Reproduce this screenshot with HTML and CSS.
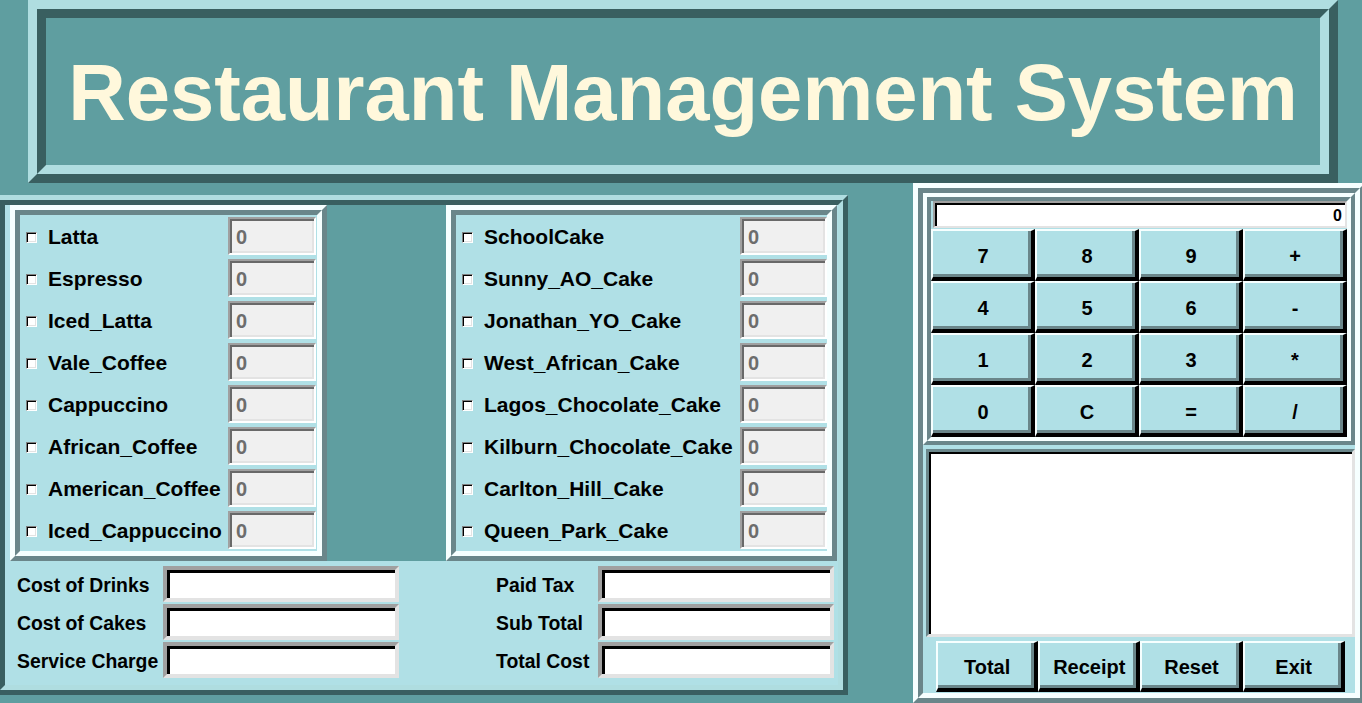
FILE: index.html
```html
<!DOCTYPE html>
<html>
<head>
<meta charset="utf-8">
<title>Restaurant Management System</title>
<link rel="stylesheet" href="styles.css">
</head>
<body>
<div class="app">
  <header class="title-outer">
    <div class="title-inner">
      <h1>Restaurant Management System</h1>
    </div>
  </header>
  <div class="main">
    <section class="order-outer">
      <div class="order-inner">
        <div class="menus">
          <div class="strip"></div>
          <div class="menu-outer drinks">
            <div class="menu-inner">
              <div class="row"><span class="chk"></span><span class="lbl">Latta</span><span class="qty">0</span></div>
              <div class="row"><span class="chk"></span><span class="lbl">Espresso</span><span class="qty">0</span></div>
              <div class="row"><span class="chk"></span><span class="lbl">Iced_Latta</span><span class="qty">0</span></div>
              <div class="row"><span class="chk"></span><span class="lbl">Vale_Coffee</span><span class="qty">0</span></div>
              <div class="row"><span class="chk"></span><span class="lbl">Cappuccino</span><span class="qty">0</span></div>
              <div class="row"><span class="chk"></span><span class="lbl">African_Coffee</span><span class="qty">0</span></div>
              <div class="row"><span class="chk"></span><span class="lbl">American_Coffee</span><span class="qty">0</span></div>
              <div class="row"><span class="chk"></span><span class="lbl">Iced_Cappuccino</span><span class="qty">0</span></div>
            </div>
          </div>
          <div class="gap"></div>
          <div class="menu-outer cakes">
            <div class="menu-inner">
              <div class="row"><span class="chk"></span><span class="lbl">SchoolCake</span><span class="qty">0</span></div>
              <div class="row"><span class="chk"></span><span class="lbl">Sunny_AO_Cake</span><span class="qty">0</span></div>
              <div class="row"><span class="chk"></span><span class="lbl">Jonathan_YO_Cake</span><span class="qty">0</span></div>
              <div class="row"><span class="chk"></span><span class="lbl">West_African_Cake</span><span class="qty">0</span></div>
              <div class="row"><span class="chk"></span><span class="lbl">Lagos_Chocolate_Cake</span><span class="qty">0</span></div>
              <div class="row"><span class="chk"></span><span class="lbl">Kilburn_Chocolate_Cake</span><span class="qty">0</span></div>
              <div class="row"><span class="chk"></span><span class="lbl">Carlton_Hill_Cake</span><span class="qty">0</span></div>
              <div class="row"><span class="chk"></span><span class="lbl">Queen_Park_Cake</span><span class="qty">0</span></div>
            </div>
          </div>
          <div class="strip thin"></div>
        </div>
        <div class="costs">
          <span class="clbl">Cost of Drinks</span><span class="cval"></span>
          <span class="clbl right">Paid Tax</span><span class="cval"></span>
          <span class="clbl">Cost of Cakes</span><span class="cval"></span>
          <span class="clbl right">Sub Total</span><span class="cval"></span>
          <span class="clbl">Service Charge</span><span class="cval"></span>
          <span class="clbl right">Total Cost</span><span class="cval"></span>
        </div>
      </div>
    </section>
    <aside class="side-outer">
      <div class="side-inner">
        <div class="calc-outer">
          <div class="calc-inner">
            <div class="display">0</div>
            <div class="keys">
              <button class="key">7</button><button class="key">8</button><button class="key">9</button><button class="key">+</button>
              <button class="key">4</button><button class="key">5</button><button class="key">6</button><button class="key">-</button>
              <button class="key">1</button><button class="key">2</button><button class="key">3</button><button class="key">*</button>
              <button class="key">0</button><button class="key">C</button><button class="key">=</button><button class="key">/</button>
            </div>
          </div>
        </div>
        <div class="receipt"></div>
        <div class="actions">
          <button class="act">Total</button><button class="act">Receipt</button><button class="act">Reset</button><button class="act">Exit</button>
        </div>
      </div>
    </aside>
  </div>
</div>
</body>
</html>
```

FILE: styles.css
```css
* { box-sizing: border-box; }
html, body { margin: 0; padding: 0; }
body {
  width: 1362px;
  height: 703px;
  overflow: hidden;
  background: #5F9EA0;
  font-family: "Liberation Sans", Arial, sans-serif;
}
.app { width: 1362px; height: 703px; overflow: hidden; }

/* title */
.title-outer {
  margin-left: 28px;
  width: 1310px;
  height: 183px;
  border: 9px solid;
  border-color: #AFDDE0 #395F60 #395F60 #AFDDE0;
}
.title-inner {
  height: 100%;
  border: 9px solid;
  border-color: #395F60 #AFDDE0 #AFDDE0 #395F60;
  display: flex;
  align-items: center;
  justify-content: center;
}
.title-inner h1 {
  margin: 0;
  font-size: 79.6px;
  line-height: 1;
  font-weight: bold;
  color: #FFF8DC;
  padding-top: 3px;
}

.main { display: flex; align-items: flex-start; }

/* order frame */
.order-outer {
  margin-left: -5px;
  margin-top: 12px;
  width: 853px;
  height: 500px;
  flex: none;
  border: 5px solid;
  border-color: #AFDDE0 #395F60 #395F60 #AFDDE0;
}
.order-inner {
  height: 100%;
  border: 5px solid;
  border-color: #395F60 #AFDDE0 #AFDDE0 #395F60;
  background: #B0E0E6;
  display: flex;
  flex-direction: column;
}
.menus { display: flex; height: 356px; flex: none; }
.strip { width: 5px; flex: none; }
.strip.thin { width: 1px; }
.gap { width: 119px; flex: none; background: #5F9EA0; }
.menu-outer {
  flex: none;
  height: 356px;
  border: 5px solid;
  border-color: #F6FFFF #6A868A #6A868A #F6FFFF;
}
.drinks { width: 317px; }
.cakes { width: 391px; }
.menu-inner {
  height: 100%;
  border: 5px solid;
  border-color: #6A868A #F6FFFF #F6FFFF #6A868A;
  background: #B0E0E6;
  display: flex;
  flex-direction: column;
}
.row {
  height: 42px;
  display: grid;
  align-items: center;
  grid-template-columns: 28px 180px 88px;
}
.cakes .row { grid-template-columns: 28px 256px 87px; }
.chk {
  justify-self: start;
  margin-left: 6px;
  margin-top: 2px;
  width: 11px;
  height: 11px;
  background: #fff;
  border: 1px solid;
  border-color: #808080 #fff #fff #808080;
  box-shadow: inset 1px 1px 0 #000, inset -1px -1px 0 #e3e3e3;
}
.lbl {
  font-size: 21px;
  font-weight: bold;
  color: #000;
  white-space: nowrap;
  padding-top: 2px;
}
.qty {
  height: 38px;
  background: #F0F0F0;
  border: 2px solid;
  border-color: #A0A0A0 #fff #fff #A0A0A0;
  box-shadow: inset 2px 2px 0 #696969, inset -2px -2px 0 #E3E3E3;
  color: #6D6D6D;
  font-size: 20px;
  font-weight: bold;
  line-height: 36px;
  padding-left: 6px;
}

/* costs */
.costs {
  flex: 1;
  display: grid;
  grid-template-columns: 146px 236px 97px 102px 236px;
  grid-auto-rows: 36px;
  row-gap: 2px;
  padding: 5px 0 0 12px;
  align-items: center;
}
.clbl {
  font-size: 19.4px;
  font-weight: bold;
  white-space: nowrap;
  padding-top: 2px;
}
.clbl.right { grid-column: 4; }
.cval {
  height: 36px;
  background: #fff;
  border: 4px solid;
  border-color: #A0A0A0 #E3E3E3 #E3E3E3 #A0A0A0;
  box-shadow: inset 3px 3px 0 #000;
}

/* side panel */
.side-outer {
  margin-left: 65px;
  width: 452px;
  height: 520px;
  flex: none;
  border: 5px solid;
  border-color: #F6FFFF #6A868A #6A868A #F6FFFF;
}
.side-inner {
  height: 100%;
  border: 5px solid;
  border-color: #6A868A #F6FFFF #F6FFFF #6A868A;
  background: #B0E0E6;
  display: flex;
  flex-direction: column;
}
.calc-outer {
  flex: none;
  border: 4px solid;
  border-color: #F6FFFF #6A868A #6A868A #F6FFFF;
}
.calc-inner {
  border: 4px solid;
  border-color: #6A868A #F6FFFF #F6FFFF #6A868A;
  background: #B0E0E6;
}
.display {
  height: 27px;
  margin: 0 0 1px 2px;
  background: #fff;
  border: 2px solid;
  border-color: #A0A0A0 #E3E3E3 #E3E3E3 #A0A0A0;
  box-shadow: inset 2px 2px 0 #000;
  text-align: right;
  font-size: 16px;
  font-weight: bold;
  line-height: 25px;
  padding-right: 3px;
}
.keys {
  display: grid;
  grid-template-columns: repeat(4, 104px);
  grid-auto-rows: 52px;
}
.key, .act {
  margin: 0;
  padding: 4px 0 0 2px;
  background: #B0E0E6;
  border-style: solid;
  border-width: 2px 4px 4px 2px;
  border-color: #F6FFFF #000 #000 #F6FFFF;
  box-shadow: inset -3px -3px 0 #6A868A;
  font-family: "Liberation Sans", Arial, sans-serif;
  font-size: 20px;
  font-weight: bold;
  color: #000;
}
.receipt {
  flex: none;
  height: 188px;
  margin: 4px 0 0 3px;
  background: #fff;
  border: 3px solid;
  border-color: #6A868A #E3E3E3 #E3E3E3 #6A868A;
  box-shadow: inset 2px 2px 0 #000;
}
.actions {
  flex: 1;
  display: grid;
  grid-template-columns: repeat(4, 102.2px);
  grid-template-rows: 51px;
  padding: 4px 0 0 13px;
}
```
